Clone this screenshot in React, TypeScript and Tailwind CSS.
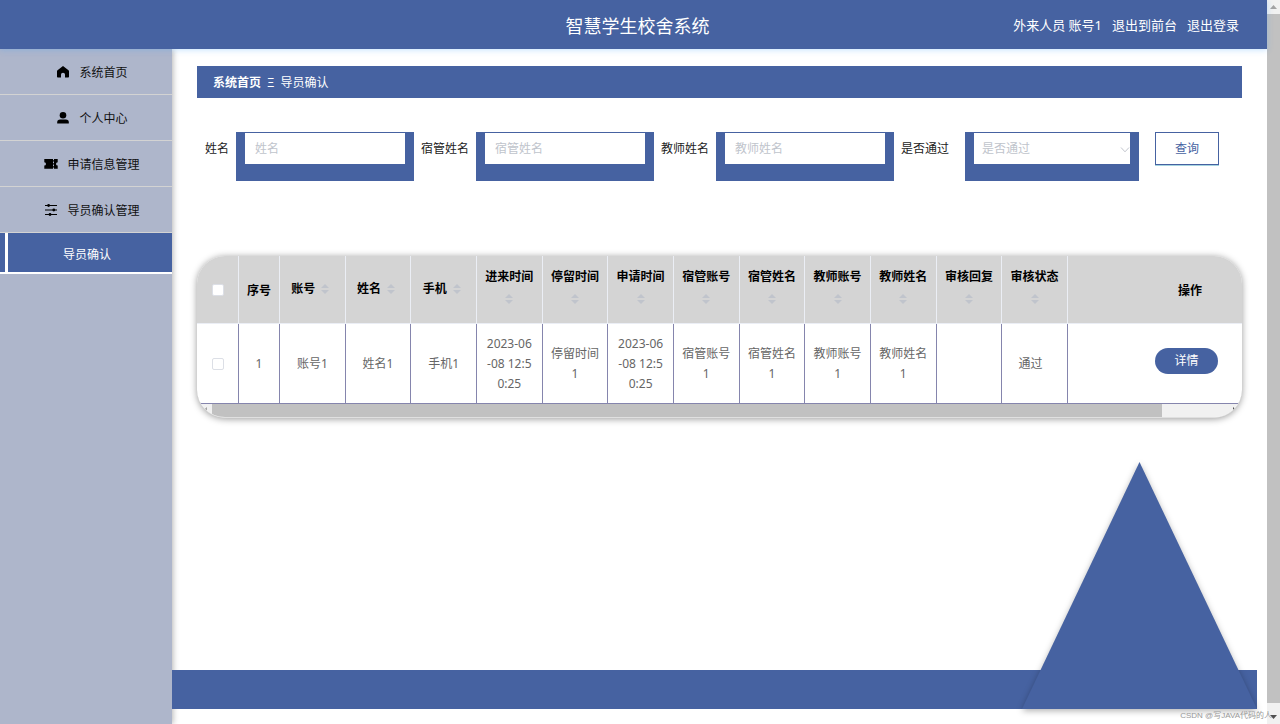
import clsx from "clsx";

const menuItems = [
  { label: "系统首页", icon: "home" },
  { label: "个人中心", icon: "user" },
  { label: "申请信息管理", icon: "ticket" },
  { label: "导员确认管理", icon: "operation" },
];

const columns = [
  { title: "账号", value: "账号1" },
  { title: "姓名", value: "姓名1" },
  { title: "手机", value: "手机1" },
  { title: "进来时间", value: "2023-06-08 12:50:25" },
  { title: "停留时间", value: "停留时间1" },
  { title: "申请时间", value: "2023-06-08 12:50:25" },
  { title: "宿管账号", value: "宿管账号1" },
  { title: "宿管姓名", value: "宿管姓名1" },
  { title: "教师账号", value: "教师账号1" },
  { title: "教师姓名", value: "教师姓名1" },
  { title: "审核回复", value: "" },
  { title: "审核状态", value: "通过" },
];

const MenuIcon = ({ name }: { name: string }) => (
  <svg viewBox="0 0 14 14" className="w-[14px] h-[14px] mb-0.5 fill-black" aria-hidden="true">
    {name === "home" && (
      <path d="M7 1 L12.5 5.2 Q13 5.6 13 6.2 V11.7 Q13 12.5 12.2 12.5 H9 V9.6 Q9 7.8 7 7.8 Q5 7.8 5 9.6 V12.5 H1.8 Q1 12.5 1 11.7 V6.2 Q1 5.6 1.5 5.2 Z" />
    )}
    {name === "user" && (
      <>
        <circle cx="7" cy="4.2" r="3.3" />
        <path d="M1.2 12.6 V11.4 Q1.2 8.6 4.2 8.6 H9.8 Q12.8 8.6 12.8 11.4 V12.6 Z" />
      </>
    )}
    {name === "ticket" && (
      <path
        fillRule="evenodd"
        d="M0.3 2 H9 V3.2 H10 V2 H13.7 V5.2 A1.7 1.7 0 0 0 13.7 8.6 V11.8 H10 V10.6 H9 V11.8 H0.3 V8.6 A1.7 1.7 0 0 0 0.3 5.2 Z M9 4.6 V6.2 H10 V4.6 Z M9 7.6 V9.2 H10 V7.6 Z"
      />
    )}
    {name === "operation" && (
      <>
        <path d="M1 2 H13 V3 H1 Z M1 6.5 H13 V7.5 H1 Z M1 11 H13 V12 H1 Z" />
        <circle cx="4.6" cy="2.5" r="1.4" />
        <circle cx="9.8" cy="7" r="1.4" />
        <circle cx="6" cy="11.5" r="1.4" />
      </>
    )}
  </svg>
);

const SortCaret = ({ className }: { className?: string }) => (
  <svg viewBox="0 0 8 10" className={clsx("w-2 h-[10px] fill-[#c0c4cc]", className)} aria-hidden="true">
    <path d="M0 4 L4 0 L8 4 Z" />
    <path d="M0 6 L4 10 L8 6 Z" />
  </svg>
);

const Header = () => (
  <header className="relative z-10 grid grid-cols-[1fr_auto_1fr] items-center h-[49px] pl-9 pr-7 pt-0.5 bg-[#4662a1] text-white shadow-[0_1px_6px_rgba(64,158,255,0.3)]">
    <h1 className="col-start-2 text-lg">智慧学生校舍系统</h1>
    <nav className="flex justify-end gap-2.5 text-[13px] whitespace-nowrap">
      <span>外来人员 账号1</span>
      <a href="#front">退出到前台</a>
      <a href="#logout">退出登录</a>
    </nav>
  </header>
);

const Sidebar = () => (
  <aside className="w-[172px] shrink-0 bg-[#aeb6cb] shadow-[1px_0_6px_rgba(0,0,0,0.3)]">
    <nav>
      {menuItems.map((item) => (
        <a
          key={item.label}
          href="#menu"
          className="flex items-center justify-center gap-[9px] h-[46px] pl-3 pt-0.5 border-b border-[#d3d3d3] text-[#111]"
        >
          <MenuIcon name={item.icon} />
          {item.label}
        </a>
      ))}
      <a href="#confirm" className="flex h-[41px] border-b-2 border-white bg-[#4662a1] text-white">
        <span className="w-2 border-r-3 border-white" />
        <span className="flex-1 flex items-center justify-center pr-1.5 pt-1">导员确认</span>
      </a>
    </nav>
  </aside>
);

const SearchField = ({ id, label }: { id: string; label: string }) => (
  <div className="flex gap-[7px]">
    <label htmlFor={id} className="leading-[34px]">
      {label}
    </label>
    <input
      id={id}
      placeholder={label}
      className="w-[178px] h-[49px] px-2.5 border-[#4662a1] border-t border-x-9 border-b-17 bg-white placeholder:text-[#c0c4cc] outline-none"
    />
  </div>
);

const SearchForm = () => (
  <form className="flex gap-[7px] pl-2 mt-[34px]">
    <SearchField id="name" label="姓名" />
    <SearchField id="dormName" label="宿管姓名" />
    <SearchField id="teacherName" label="教师姓名" />
    <div className="flex gap-4">
      <label htmlFor="passed" className="leading-[34px]">
        是否通过
      </label>
      <div className="relative">
        <select
          id="passed"
          className="appearance-none w-[174px] h-[49px] px-2 border-[#4662a1] border-t border-x-9 border-b-17 bg-white text-[#c0c4cc] outline-none"
        >
          <option>是否通过</option>
        </select>
        <svg viewBox="0 0 10 6" className="absolute right-[9px] top-[15px] w-[10px] h-[6px] fill-none stroke-[#c0c4cc]">
          <path d="M1 0.5 L5 4.8 L9 0.5" />
        </svg>
      </div>
    </div>
    <button
      type="button"
      className="ml-[9px] w-16 h-[33px] border border-[#4662a1] bg-white text-[#4662a1] shadow-[0_1px_0_#a5d3e0]"
    >
      查询
    </button>
  </form>
);

const CheckBox = ({ label }: { label: string }) => (
  <input
    type="checkbox"
    aria-label={label}
    className="block mx-auto appearance-none w-3 h-3 rounded-xs border border-[#dcdfe6] bg-white"
  />
);

const DataTable = () => (
  <div className="mt-[75px] rounded-[28px] overflow-hidden border-b border-[#e0e0e0] bg-white shadow-[0_1px_7px_rgba(0,0,0,0.4)]">
    <table className="w-full table-fixed border-separate border-spacing-0 text-center">
      <colgroup>
        <col className="w-[42px]" />
        <col className="w-[41px]" />
        {columns.map((column) => (
          <col key={column.title} />
        ))}
        <col className="w-[174px]" />
      </colgroup>
      <thead>
        <tr className="h-[68px] bg-[#d4d4d4] text-black">
          <th className="border-r border-b border-[#ebeef5]">
            <CheckBox label="全选" />
          </th>
          <th className="pt-0.5 border-r border-b border-[#ebeef5]">序号</th>
          {columns.map((column) => (
            <th
              key={column.title}
              className={clsx(
                "border-r border-b border-[#ebeef5] leading-[23px]",
                column.title.length > 2 ? "pb-1.5" : "pr-1 pb-0.5",
              )}
            >
              {column.title.length > 2 ? (
                <>
                  <div className="whitespace-nowrap">{column.title}</div>
                  <SortCaret className="block mx-auto mt-1.5 mb-1" />
                </>
              ) : (
                <div className="flex items-center justify-center gap-1.5">
                  {column.title}
                  <SortCaret />
                </div>
              )}
            </th>
          ))}
          <th className="pl-[70px] pt-0.5 border-b border-[#ebeef5]">操作</th>
        </tr>
      </thead>
      <tbody>
        <tr className="h-20 text-[#666] leading-5">
          <td className="border-r border-b border-[#8585ad]">
            <CheckBox label="选择" />
          </td>
          <td className="border-r border-b border-[#8585ad]">1</td>
          {columns.map((column) => (
            <td
              key={column.title}
              className={clsx(
                "pl-2 border-r border-b border-[#8585ad] break-all",
                column.value === "通过" ? "pr-4" : "pr-2",
              )}
            >
              {column.value}
            </td>
          ))}
          <td className="pl-[63px] pb-1.5 border-b border-[#8585ad]">
            <button type="button" className="w-[63px] h-[26px] rounded-full bg-[#4662a1] text-white">
              详情
            </button>
          </td>
        </tr>
      </tbody>
    </table>
    <div className="flex items-center h-[13px] bg-[#f1f1f1]">
      <svg viewBox="0 0 15 13" className="w-[15px] h-[13px] fill-[#a3a3a3]">
        <path d="M10 3 L6 6.5 L10 10 Z" />
      </svg>
      <div className="flex-1 h-full">
        <div className="w-14/15 h-full bg-[#c1c1c1]" />
      </div>
      <svg viewBox="0 0 12 13" className="w-3 h-[13px] fill-[#505050]">
        <path d="M3 3 L7 6.5 L3 10 Z" />
      </svg>
    </div>
  </div>
);

const BottomBanner = () => (
  <div className="relative mt-auto mb-[15px] mr-2.5 h-[39px] bg-[#4662a1]">
    <svg
      viewBox="0 0 236 247"
      className="absolute right-0 bottom-0 w-[236px] h-[247px] overflow-visible fill-[#4662a1] drop-shadow-[0_2px_3px_rgba(0,0,0,0.3)]"
    >
      <path d="M118.5 0 L236 247 H1 Z" />
    </svg>
  </div>
);

const PageScrollbar = () => (
  <div className="flex flex-col items-center w-[13px] shrink-0 bg-[#f1f1f1]">
    <svg viewBox="0 0 13 14" className="w-[13px] h-[14px] fill-[#a3a3a3]">
      <path d="M3 9 L6.5 5 L10 9 Z" />
    </svg>
    <div className="flex-1 w-full bg-[#c1c1c1]" />
    <svg viewBox="0 0 13 21" className="w-[13px] h-[21px] fill-[#505050]">
      <path d="M3 12 L6.5 16 L10 12 Z" />
    </svg>
  </div>
);

const App = () => {
  return (
    <div className="relative flex min-h-screen bg-white text-xs text-[#222] font-['Noto_Sans','Noto_Sans_CJK_SC',sans-serif]">
      <div className="flex-1 min-w-0 flex flex-col">
        <Header />
        <div className="flex-1 flex">
          <Sidebar />
          <main className="flex-1 min-w-0 flex flex-col">
            <div className="px-[25px] pt-[17px]">
              <nav className="flex items-center gap-1.5 h-8 px-4 pt-0.5 bg-[#4662a1] text-white">
                <a href="#home" className="font-bold">
                  系统首页
                </a>
                <span>Ξ</span>
                <span>导员确认</span>
              </nav>
              <SearchForm />
              <DataTable />
            </div>
            <BottomBanner />
          </main>
        </div>
      </div>
      <PageScrollbar />
      <div className="absolute right-2 bottom-0 font-['Liberation_Sans','Noto_Sans_CJK_SC',sans-serif] text-[8px] leading-4 text-[#999] whitespace-nowrap">
        CSDN @写JAVA代码的人
      </div>
    </div>
  );
};

export default App;
